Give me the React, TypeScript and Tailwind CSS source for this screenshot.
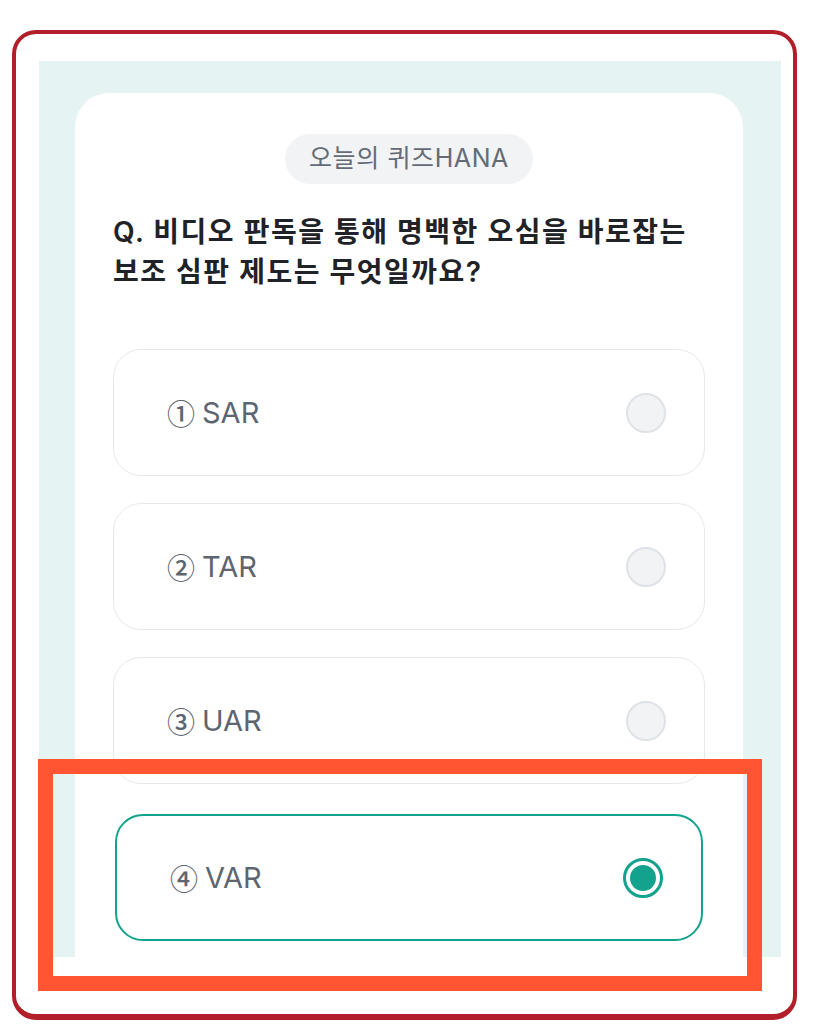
import React from "react";

interface Option {
  num: string;
  label: string;
}

const options: Option[] = [
  { num: "①", label: "SAR" },
  { num: "②", label: "TAR" },
  { num: "③", label: "UAR" },
  { num: "④", label: "VAR" },
];

const selectedIndex = 3;

function Radio({ checked }: { checked: boolean }) {
  if (checked) {
    return (
      <span className="flex h-[40px] w-[40px] items-center justify-center rounded-full border-[3px] border-[#13a38c] bg-white">
        <span className="h-[26px] w-[26px] rounded-full bg-[#13a38c]" />
      </span>
    );
  }
  return <span className="h-[40px] w-[40px] rounded-full border-2 border-[#dfe2e6] bg-[#f1f3f5]" />;
}

export default function App() {
  return (
    <div
      className="relative h-[1024px] w-[819px] overflow-hidden bg-white"
      style={{ fontFamily: 'Inter, "Noto Sans CJK KR", "Noto Sans", sans-serif' }}
    >
      <div className="ml-[12px] mt-[30px] h-[990px] w-[785px] rounded-[24px] border-[4px] border-b-[6px] border-[#b1202a] pl-[23px] pt-[27px]">
        <div className="h-[896px] w-[742px] overflow-hidden bg-[#e5f4f2] pl-[36px] pt-[32px]">
          <div className="h-[1000px] w-[668px] rounded-[34px] bg-white px-[38px] pt-[41px]">
            <div className="flex justify-center">
              <span className="flex h-[50px] items-center rounded-full bg-[#f1f3f5] px-[24px] text-[25px] tracking-[0.6px] text-[#646b75]">
                오늘의 퀴즈HANA
              </span>
            </div>
            <h1 className="mt-[28px] text-[28px] font-semibold leading-[40px] tracking-[1.5px] text-[#1f2226]">
              Q. 비디오 판독을 통해 명백한 오심을 바로잡는
              <br />
              보조 심판 제도는 무엇일까요?
            </h1>
            <div className="mt-[57px] flex flex-col gap-[27px]">
              {options.map((opt, i) => {
                const checked = i === selectedIndex;
                return (
                  <div
                    key={opt.label}
                    className={`flex h-[127px] items-center justify-between rounded-[28px] bg-white pl-[53px] pr-[38px] ${
                      checked ? "mx-[2px] mt-[3px] h-[124px] border-[2.5px] border-[#13a38c]" : "border-[1.5px] border-[#e6e8eb]"
                    }`}
                  >
                    <span className="flex items-center gap-[7px] text-[29px] text-[#5d6570]">
                      <span
                        className="text-[28px] font-medium"
                        style={{ fontFamily: '"Noto Sans CJK KR", sans-serif' }}
                      >
                        {opt.num}
                      </span>
                      <span>{opt.label}</span>
                    </span>
                    <Radio checked={checked} />
                  </div>
                );
              })}
            </div>
          </div>
        </div>
      </div>
      <div className="absolute left-[38px] top-[759px] h-[232px] w-[724px] border-[15px] border-[#ff5533]" />
    </div>
  );
}
